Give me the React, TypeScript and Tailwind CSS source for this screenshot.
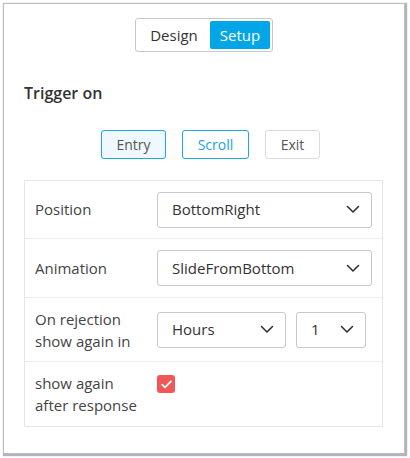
import React from "react";

const Chevron = () => (
  <svg width="14" height="9" viewBox="0 0 14 9" fill="none">
    <path d="M1.5 1.5 L7 7 L12.5 1.5" stroke="#333" strokeWidth="1.6" strokeLinecap="round" strokeLinejoin="round" />
  </svg>
);

const Select = ({ value, w }: { value: string; w: string }) => (
  <div className={`${w} h-[36px] border border-[#c9c9c9] rounded-[3px] bg-white flex items-center justify-between pl-[14px] pr-[11px] text-[15px] text-[#333]`}>
    <span>{value}</span>
    <Chevron />
  </div>
);

export default function App() {
  return (
    <div className="w-[410px] h-[458px] bg-white pt-[3px] pl-[3px]" style={{ fontFamily: '"Open Sans", sans-serif' }}>
      <div className="w-[402px] h-[451px] border border-[#bdbdbd] shadow-[1px_1px_1px_1px_rgba(120,130,150,0.6)] flex flex-col">
        <div className="flex justify-center pt-[14px]">
          <div className="flex border border-[#c8c8c8] rounded-[3px] p-[2px] h-[34px]">
            <div className="px-[10px] flex items-center text-[15px] text-[#333] w-[72px] justify-center">Design</div>
            <div className="w-[60px] flex items-center justify-center bg-[#02a6e6] text-white text-[15px] rounded-[2px]">Setup</div>
          </div>
        </div>
        <div className="pl-[20px] mt-[30px] text-[16px] font-semibold text-[#333] leading-[22px]">Trigger on</div>
        <div className="flex gap-[16px] pl-[97px] mt-[26px]">
          <div className="w-[65px] h-[29px] border border-[#1ca6e2] rounded-[3px] bg-[#eef8fe] flex items-center justify-center text-[14px] text-[#555]">Entry</div>
          <div className="w-[67px] h-[29px] border border-[#1ca6e2] rounded-[3px] bg-white flex items-center justify-center text-[14px] text-[#1a9fdc]">Scroll</div>
          <div className="w-[55px] h-[29px] border border-[#dcdcdc] rounded-[3px] bg-white flex items-center justify-center text-[14px] text-[#555]">Exit</div>
        </div>
        <div className="ml-[20px] mt-[21px] w-[359px] border border-[#e3e7ec] text-[15px] text-[#444]">
          <div className="h-[58px] flex items-center border-b border-[#e9eef3] pl-[10px]">
            <div className="w-[122px]">Position</div>
            <Select value="BottomRight" w="w-[215px]" />
          </div>
          <div className="h-[59px] flex items-center border-b border-[#e9eef3] pl-[10px]">
            <div className="w-[122px]">Animation</div>
            <Select value="SlideFromBottom" w="w-[215px]" />
          </div>
          <div className="h-[64px] flex items-center border-b border-[#e9eef3] pl-[10px]">
            <div className="w-[122px] leading-[22px]">On rejection<br />show again in</div>
            <Select value="Hours" w="w-[129px]" />
            <div className="ml-[10px]">
              <Select value="1" w="w-[70px]" />
            </div>
          </div>
          <div className="h-[64px] flex items-center pl-[10px]">
            <div className="w-[122px] leading-[22px]">show again<br />after response</div>
            <div className="w-[18px] h-[18px] rounded-[3px] bg-[#f25656] flex items-center justify-center -mt-[20px]">
              <svg width="11" height="9" viewBox="0 0 11 9" fill="none">
                <path d="M1.2 4.6 L4 7.3 L9.8 1.5" stroke="white" strokeWidth="1.8" strokeLinecap="round" strokeLinejoin="round" />
              </svg>
            </div>
          </div>
        </div>
      </div>
    </div>
  );
}
